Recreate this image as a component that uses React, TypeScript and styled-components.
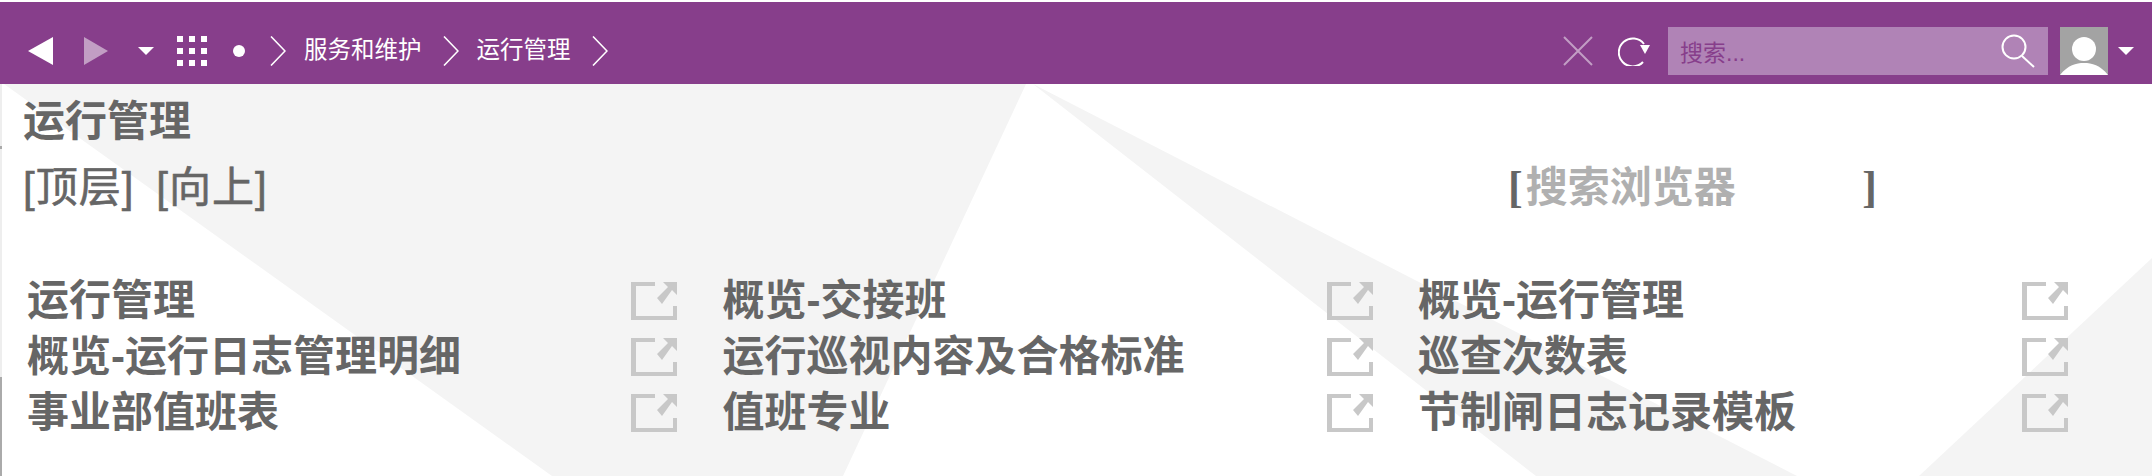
import React from 'react';
import styled, { createGlobalStyle } from 'styled-components';

const backdrop = encodeURIComponent(
  `<svg xmlns="http://www.w3.org/2000/svg" width="2152" height="392"><g fill="#f4f4f4"><polygon points="4,0 1026,0 843,392 552,392"/><polygon points="1033,0 1797,392 1536,392"/><polygon points="1919,392 2152,174 2152,392"/></g></svg>`
);

const GlobalStyle = createGlobalStyle`
  html, body {
    margin: 0;
    padding: 0;
    background: #ffffff;
  }
  body {
    font-family: "Liberation Sans", "Noto Sans CJK SC", sans-serif;
    color: #666666;
  }
`;

const Page = styled.div`
  width: 2152px;
  height: 476px;
  padding-top: 2px;
  box-sizing: border-box;
  overflow: hidden;
`;

const TopBar = styled.header`
  display: flex;
  align-items: center;
  justify-content: space-between;
  height: 82px;
  padding: 16px 18px 0 28px;
  box-sizing: border-box;
  background: #873e8b;
`;

const BarGroup = styled.div`
  display: flex;
  align-items: center;
`;

const Crumb = styled.span`
  margin: 0 21px 2px 18px;
  font-size: 23.5px;
  line-height: 30px;
  color: #ffffff;
`;

const GridDots = styled.div`
  display: grid;
  grid-template-columns: repeat(3, 6px);
  grid-auto-rows: 6px;
  gap: 6px;
  margin: 0 26px 0 23px;
  span {
    background: #ffffff;
  }
`;

const Dot = styled.i`
  width: 12px;
  height: 12px;
  border-radius: 50%;
  background: #ffffff;
  margin-right: 25px;
`;

const Glyph = styled.svg<{ $gap?: number }>`
  display: block;
  flex: none;
  margin-right: ${({ $gap }) => $gap ?? 0}px;
`;

const SearchBox = styled.div`
  display: flex;
  align-items: center;
  justify-content: space-between;
  width: 380px;
  height: 48px;
  margin: 0 12px 0 17px;
  padding: 0 13px 0 12px;
  box-sizing: border-box;
  background: #b083b6;
  font-size: 23px;
  color: #873e8b;
`;

const Content = styled.main`
  height: 392px;
  background:
    linear-gradient(
        to bottom,
        #eeeeee 62px,
        #aaaaaa 62px,
        #aaaaaa 65px,
        #eeeeee 65px,
        #eeeeee 293px,
        #aaaaaa 293px
      )
      no-repeat 0 0 / 2px 100%,
    url("data:image/svg+xml,${backdrop}") no-repeat 0 0,
    #ffffff;
`;

const Title = styled.h1`
  margin: 0;
  padding: 15px 0 0 23px;
  font-size: 42px;
  line-height: 46px;
  font-weight: 700;
`;

const NavRow = styled.div`
  display: flex;
  align-items: center;
  height: 58px;
  margin-top: 9px;
  padding-left: 23px;
  font-size: 42px;
  letter-spacing: 1px;
`;

const NavLink = styled.span`
  margin-right: 22px;
  -webkit-text-stroke: 0.6px #666666;
`;

const BrowserSearch = styled.div`
  display: flex;
  align-items: center;
  justify-content: space-between;
  width: 369px;
  margin-left: auto;
  margin-right: 275px;
  font-weight: 700;
  letter-spacing: 0;
`;

const Bracket = styled.span`
  padding-top: 9px;
  font-family: "Liberation Serif", serif;
  font-size: 44px;
`;

const BrowserLabel = styled.span`
  flex: 1;
  padding-left: 3px;
  color: #b0b0b0;
`;

const Items = styled.div`
  display: grid;
  grid-template-columns: repeat(3, 695.5px);
  grid-auto-rows: 56px;
  margin-top: 56px;
  padding-left: 27px;
`;

const Item = styled.div`
  display: flex;
  align-items: center;
  justify-content: space-between;
  width: 650px;
  font-size: 42px;
  font-weight: 700;
  white-space: nowrap;
`;

const ItemIcon = styled.svg`
  display: block;
  flex: none;
  margin-top: 10px;
`;

function Chevron({ gap }: { gap?: number }) {
  return (
    <Glyph $gap={gap} width="16" height="30" viewBox="0 0 16 30">
      <path d="M1 0.5L15 15 1 29.5" stroke="#ffffff" strokeWidth="1.6" fill="none" />
    </Glyph>
  );
}

function Caret() {
  return (
    <Glyph width="16" height="8" viewBox="0 0 16 8">
      <polygon points="0,0 16,0 8,8" fill="#ffffff" />
    </Glyph>
  );
}

function ExternalIcon() {
  return (
    <ItemIcon width="46" height="38" viewBox="0 0 46 38">
      <g fill="#c8c8c8">
        <path d="M0 0h24v4H5v30h37V24h4v14H0z" />
        <path d="M32 0H46V13L41 8 31 22 26 16 37 5z" />
      </g>
    </ItemIcon>
  );
}

const rows = [
  '运行管理',
  '概览-交接班',
  '概览-运行管理',
  '概览-运行日志管理明细',
  '运行巡视内容及合格标准',
  '巡查次数表',
  '事业部值班表',
  '值班专业',
  '节制闸日志记录模板',
];

export default function App() {
  return (
    <Page>
      <GlobalStyle />
      <TopBar>
        <BarGroup>
          <Glyph $gap={31} width="25" height="28" viewBox="0 0 25 28">
            <polygon points="25,0 25,28 0,14" fill="#ffffff" />
          </Glyph>
          <Glyph $gap={30} width="24" height="28" viewBox="0 0 24 28">
            <polygon points="0,0 0,28 24,14" fill="#c29ec4" />
          </Glyph>
          <Caret />
          <GridDots>
            {Array.from({ length: 9 }).map((_, i) => (
              <span key={i} />
            ))}
          </GridDots>
          <Dot />
          <Chevron />
          <Crumb>服务和维护</Crumb>
          <Chevron />
          <Crumb>运行管理</Crumb>
          <Chevron />
        </BarGroup>
        <BarGroup>
          <Glyph $gap={25} width="30" height="30" viewBox="0 0 30 30">
            <path d="M1 1l28 28M29 1L1 29" stroke="#c29ec4" strokeWidth="2" fill="none" />
          </Glyph>
          <Glyph width="33" height="30" viewBox="0 0 33 30">
            <path d="M26 8A14 14 0 1 0 25 26" stroke="#ffffff" strokeWidth="2" fill="none" />
            <polygon points="22,9 32,9 27,18" fill="#ffffff" />
          </Glyph>
          <SearchBox>
            <span>搜索...</span>
            <svg width="34" height="34" viewBox="0 0 34 34">
              <circle cx="13" cy="13" r="11.5" stroke="#ffffff" strokeWidth="2" fill="none" />
              <path d="M21 22l12 11" stroke="#ffffff" strokeWidth="2" fill="none" />
            </svg>
          </SearchBox>
          <Glyph $gap={10} width="48" height="48" viewBox="0 0 48 48">
            <rect width="48" height="48" fill="#a3a3a3" />
            <circle cx="24" cy="22" r="12" fill="#ffffff" />
            <path d="M0 48C8 38 16 36 24 36S40 38 48 48z" fill="#ffffff" />
          </Glyph>
          <Caret />
        </BarGroup>
      </TopBar>
      <Content>
        <Title>运行管理</Title>
        <NavRow>
          <NavLink>[顶层]</NavLink>
          <NavLink>[向上]</NavLink>
          <BrowserSearch>
            <Bracket>[</Bracket>
            <BrowserLabel>搜索浏览器</BrowserLabel>
            <Bracket>]</Bracket>
          </BrowserSearch>
        </NavRow>
        <Items>
          {rows.map(label => (
            <Item key={label}>
              <span>{label}</span>
              <ExternalIcon />
            </Item>
          ))}
        </Items>
      </Content>
    </Page>
  );
}
